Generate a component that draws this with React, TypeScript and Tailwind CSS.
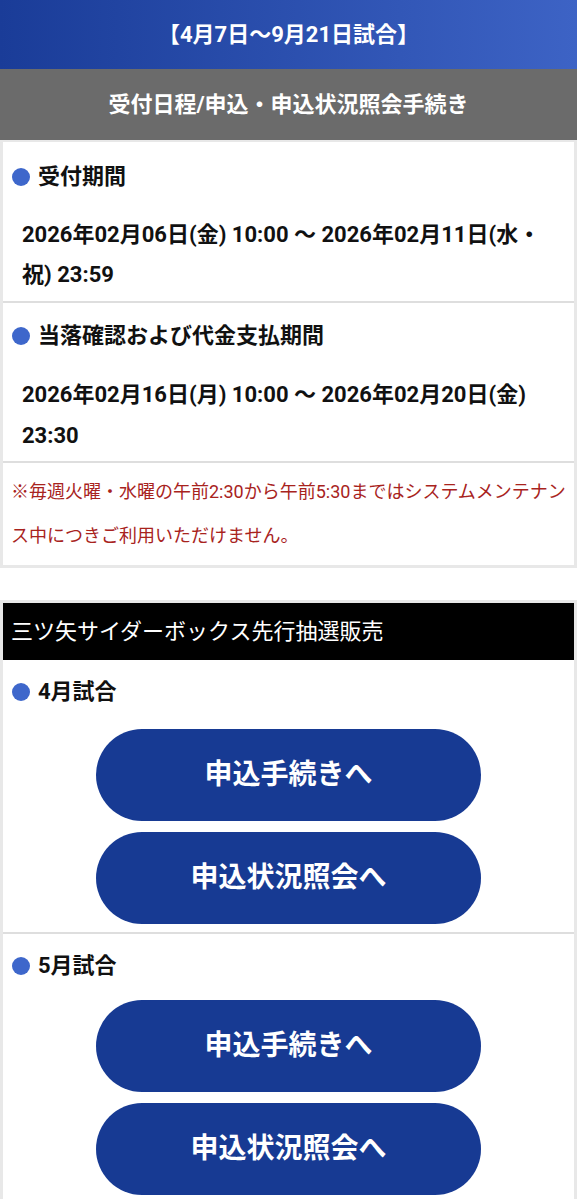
import React from "react";

const FONT = { fontFamily: "Roboto, 'Noto Sans CJK JP', 'Noto Sans', sans-serif" };

function Heading({ children }: { children: React.ReactNode }) {
  return (
    <div className="flex items-center h-[30px] pl-[9px]">
      <span className="w-[18px] h-[18px] rounded-full bg-[#3e67cb] mr-[8px] shrink-0" />
      <span className="text-[22px] font-bold text-[#111] leading-[30px]">{children}</span>
    </div>
  );
}

function Divider() {
  return <div className="h-[2px] bg-[#dedede]" />;
}

function Btn({ children }: { children: React.ReactNode }) {
  return (
    <div className="mx-auto w-[385px] h-[92px] rounded-full bg-[#173a93] flex items-center justify-center text-white text-[28px] font-bold">
      {children}
    </div>
  );
}

function Month({ label, second }: { label: string; second?: boolean }) {
  return (
    <div className="pt-[17px] pb-[8px]">
      <Heading>{label}</Heading>
      <div className={second ? "mt-[19px] flex flex-col gap-[11px]" : "mt-[22px] flex flex-col gap-[11px]"}>
        <Btn>申込手続きへ</Btn>
        <Btn>申込状況照会へ</Btn>
      </div>
    </div>
  );
}

export default function App() {
  return (
    <div className="w-[577px] min-h-[1199px] bg-white" style={FONT}>
      <div className="h-[69px] flex items-center justify-center bg-gradient-to-r from-[#1a3c98] to-[#3d63c5] text-white text-[22px] font-bold">
        【4月7日〜9月21日試合】
      </div>
      <div className="h-[71px] flex items-center justify-center bg-[#6b6b6b] text-white text-[22px] font-bold">
        受付日程/申込・申込状況照会手続き
      </div>

      <div className="border-[3px] border-t-[2px] border-[#e8e8e8]">
        <div className="pt-[20px] pb-[6px]">
          <Heading>受付期間</Heading>
          <div className="mt-[23px] pl-[19px] text-[22px] font-bold leading-[40px] text-[#111] whitespace-nowrap">
            2026年02月06日(金) 10:00 〜 2026年02月11日(水・
            <br />
            祝) 23:59
          </div>
        </div>
        <Divider />
        <div className="pt-[18px] pb-[5px]">
          <Heading>当落確認および代金支払期間</Heading>
          <div className="mt-[23px] pl-[19px] text-[22px] font-bold leading-[41px] text-[#111] whitespace-nowrap">
            2026年02月16日(月) 10:00 〜 2026年02月20日(金)
            <br />
            23:30
          </div>
        </div>
        <Divider />
        <div className="pt-[7px] pb-[7px] pl-[8px] text-[18px] leading-[44px] text-[#a8231d] whitespace-nowrap">
          ※毎週火曜・水曜の午前2:30から午前5:30まではシステムメンテナン
          <br />
          ス中につきご利用いただけません。
        </div>
      </div>

      <div className="mt-[32px] border-[3px] border-b-0 border-[#e8e8e8]">
        <div className="h-[57px] bg-black flex items-center pl-[8px] text-white text-[22px]">
          三ツ矢サイダーボックス先行抽選販売
        </div>
        <Month label="4月試合" />
        <Divider />
        <Month label="5月試合" second />
      </div>
    </div>
  );
}
